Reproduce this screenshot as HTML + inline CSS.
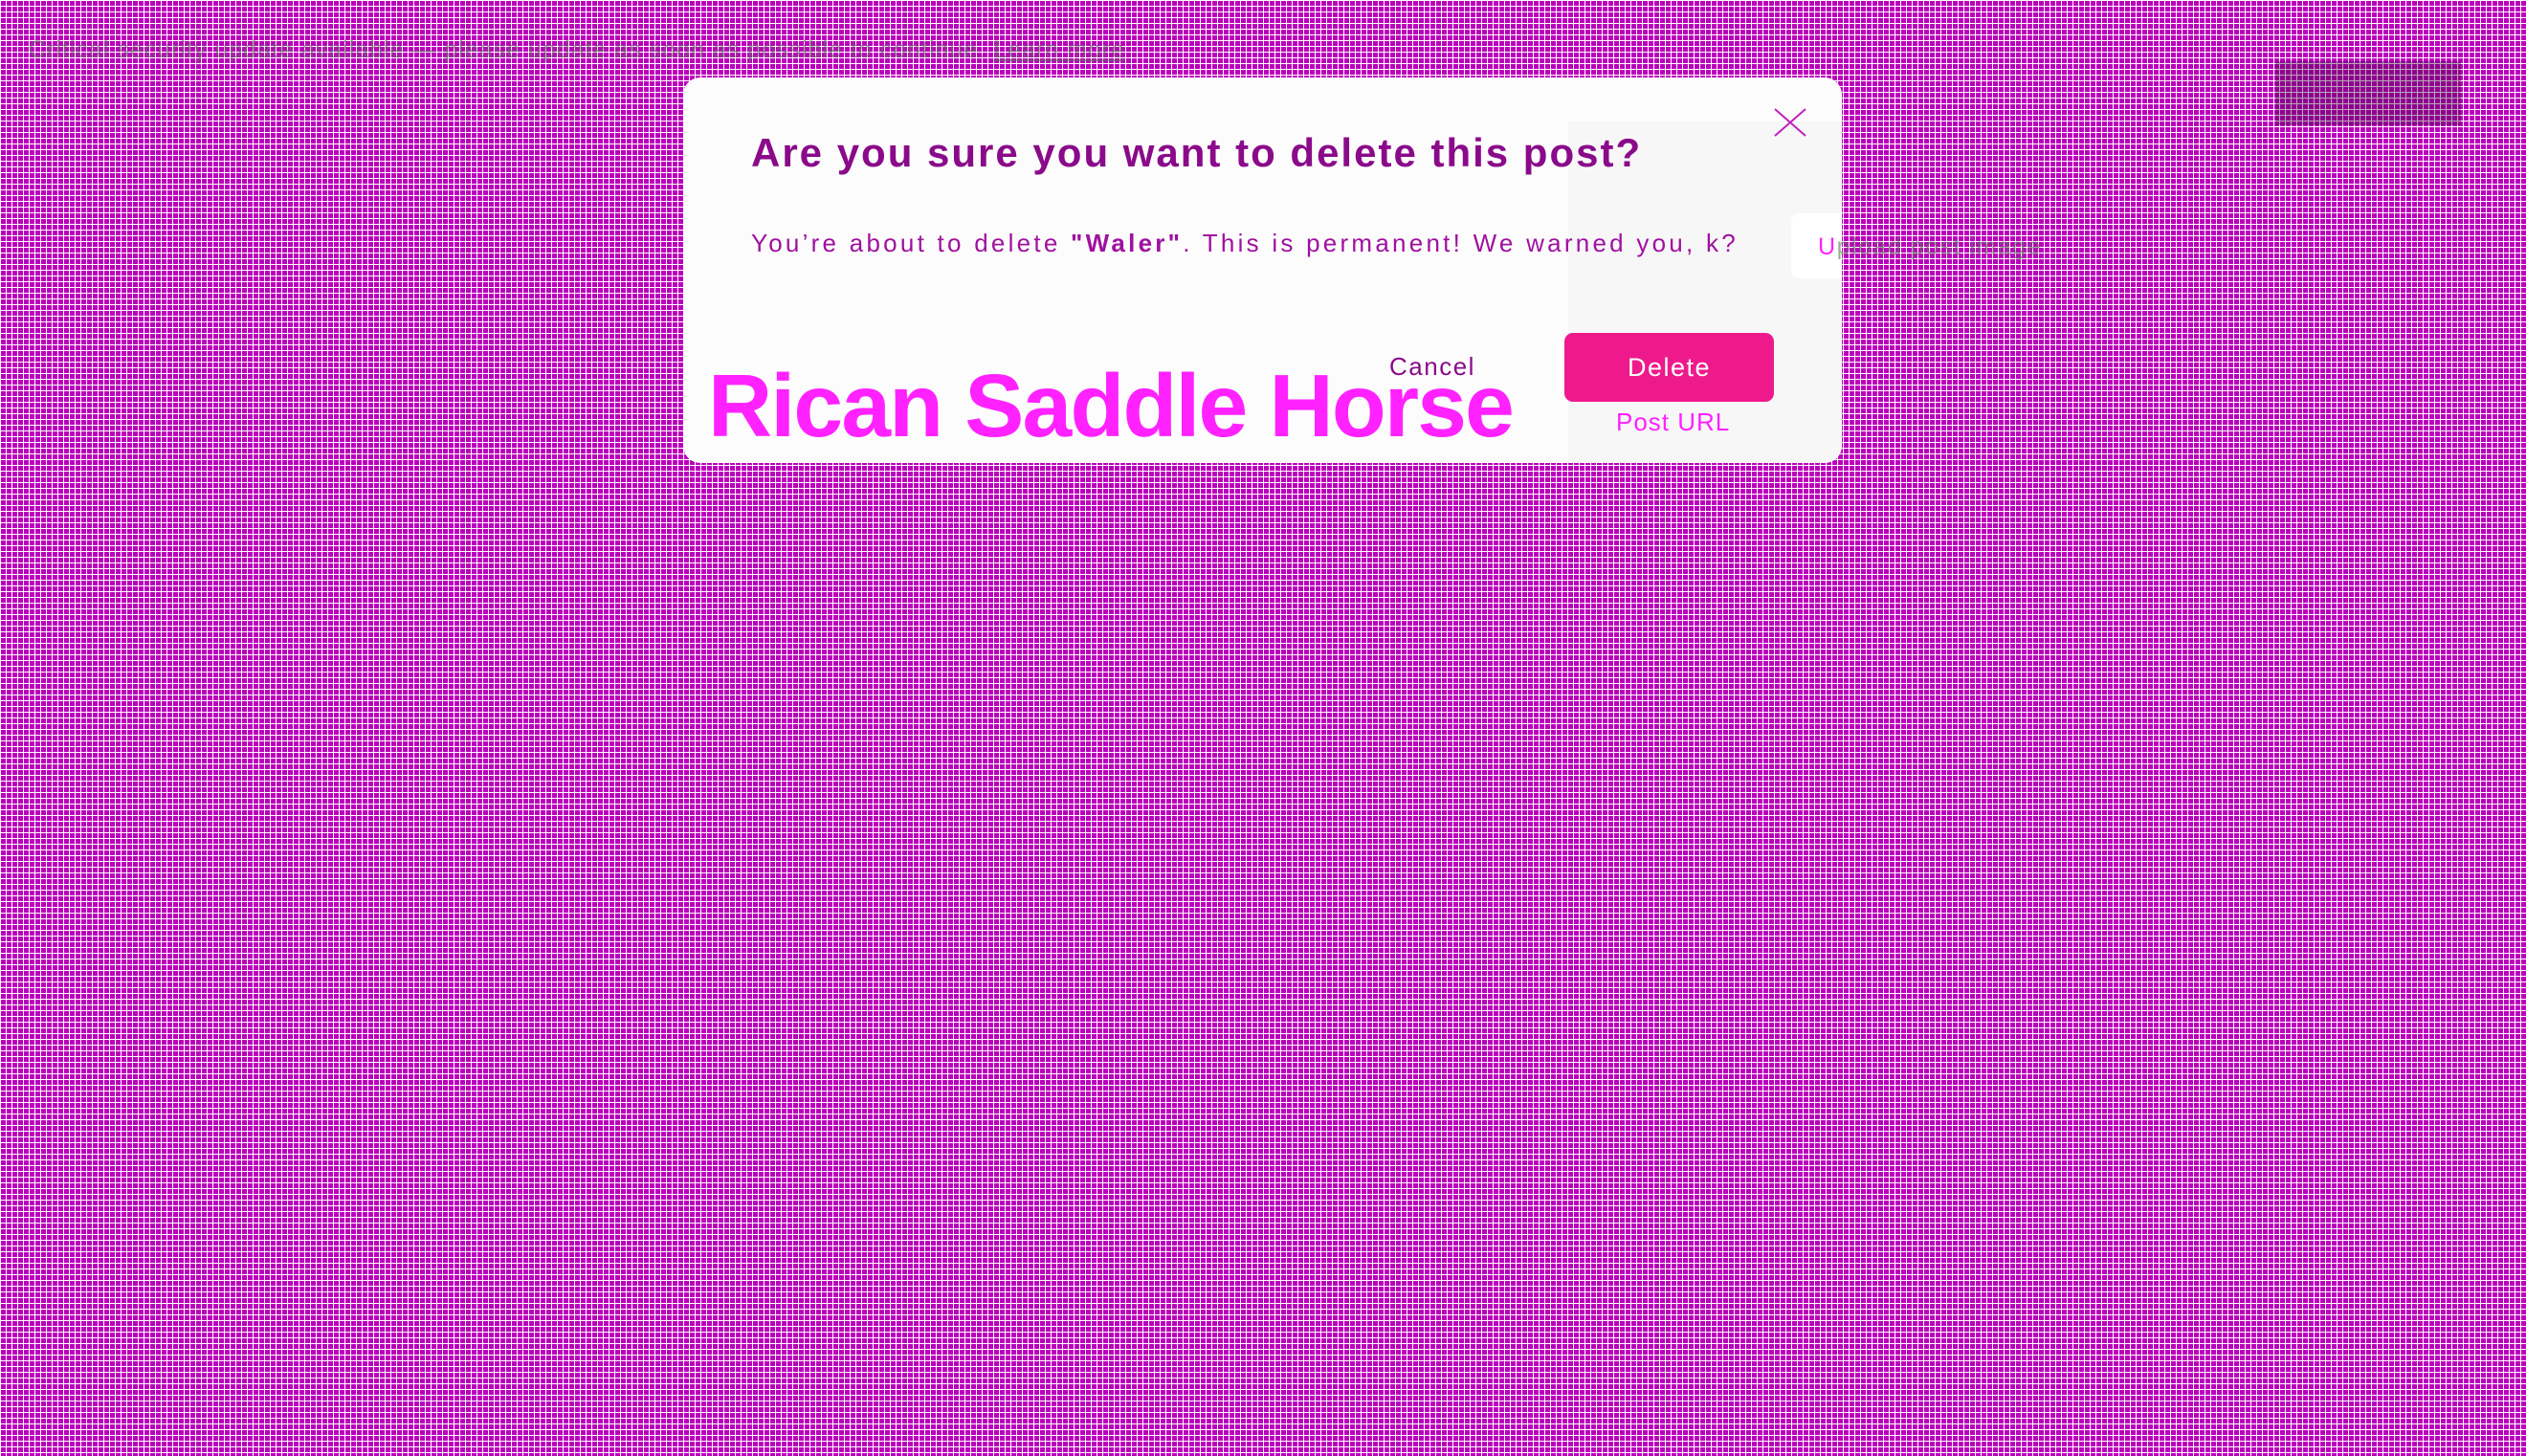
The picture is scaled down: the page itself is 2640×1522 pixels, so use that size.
<!DOCTYPE html>
<html><head><meta charset="utf-8"><style>
html,body{margin:0;padding:0;width:2640px;height:1522px;overflow:hidden}
body{background-color:#bb00bb;
background-image:linear-gradient(to right,#fff 0,#fff 1px,transparent 1px),linear-gradient(to bottom,#fff 0,#fff 1px,transparent 1px);
background-size:6px 6px;font-family:"Liberation Sans",sans-serif;position:relative}
.dk{position:absolute;background:rgba(60,0,60,.35)}
.modal{position:absolute;left:714px;top:81px;width:1211px;height:403px;background:#fcfcfc;border-radius:18px;overflow:hidden}
.grey{position:absolute;left:925px;top:46px;width:286px;height:357px;background:#f7f7f8}
.t{position:absolute;left:71px;top:58px;font-size:42px;line-height:42px;font-weight:bold;color:#8a0a8a;letter-spacing:2px;white-space:nowrap}
.b{position:absolute;left:71px;top:160px;font-size:26px;line-height:26px;color:#a010a0;white-space:nowrap;letter-spacing:3.25px}
.cancel{position:absolute;left:738px;top:289px;font-size:26px;line-height:26px;color:#8a0a8a;letter-spacing:1.5px}
.del{position:absolute;left:921px;top:267px;width:219px;height:72px;background:#ee1a8c;border-radius:9px;color:#fff;font-size:27px;text-align:center;line-height:72px;letter-spacing:1.5px}
.post{position:absolute;left:975px;top:347px;font-size:26px;line-height:26px;color:#ff22ff;letter-spacing:1px}
.big{position:absolute;left:26px;top:297px;font-size:93px;line-height:93px;font-weight:bold;color:#ff22ff;white-space:nowrap;letter-spacing:-1.8px}
.upl{position:absolute;left:1158px;top:142px;width:80px;height:68px;background:#fff;border-radius:9px}
.note{position:absolute;left:30px;top:38px;font-size:25px;color:rgba(90,120,90,.55);white-space:nowrap;letter-spacing:1px}
</style></head><body>
<div class="note">Critical security update available — please update as soon as possible to continue. <span style="text-decoration:underline">Learn more</span></div>
<div class="dk" style="left:2378px;top:64px;width:194px;height:67px"></div>
<div class="modal">
<div class="grey"></div>
<div class="upl"></div>
<div class="t">Are you sure you want to delete this post?</div>
<div class="b">You’re about to delete <b>"Waler"</b>. This is permanent! We warned you, k?</div>
<div class="cancel">Cancel</div>
<div class="del">Delete</div>
<div class="post">Post URL</div>
<div class="big">Rican Saddle Horse</div>
<svg style="position:absolute;left:1140px;top:32px" width="34" height="30" viewBox="0 0 34 30"><path d="M1 1L33 29M33 1L1 29" stroke="#c020c0" stroke-width="2" fill="none"/></svg>
</div>
<div style="position:absolute;left:1900px;top:244px;font-size:25px;letter-spacing:1.5px;color:#ff22ff">U<span style="color:rgba(90,120,90,.6)">pload post image</span></div>
</body></html>
